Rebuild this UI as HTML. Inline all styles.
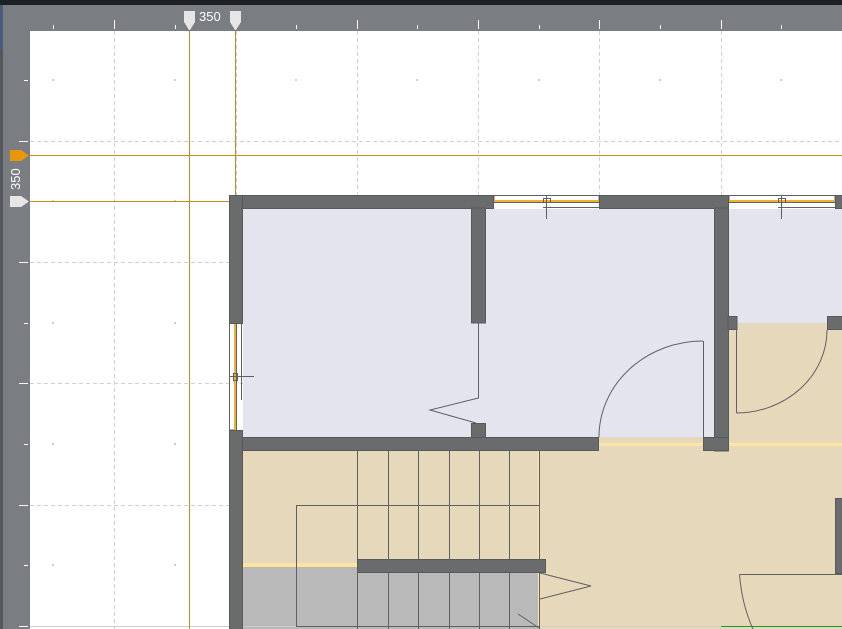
<!DOCTYPE html>
<html><head><meta charset="utf-8"><style>
html,body{margin:0;padding:0;width:842px;height:629px;overflow:hidden;background:#7a7e82}
svg{display:block}
</style></head><body>
<svg width="842" height="629" viewBox="0 0 842 629" xmlns="http://www.w3.org/2000/svg" shape-rendering="crispEdges">
<rect x="0" y="0" width="842" height="629" fill="#7a7e82"/>
<rect x="0" y="0" width="842" height="5" fill="#1d2125"/>
<rect x="0" y="5" width="3" height="624" fill="#55595d"/>
<rect x="0" y="5" width="3" height="45" fill="#4a5a80"/>
<rect x="30" y="31" width="812" height="598" fill="#ffffff"/>
<g stroke="#d0d0d0" stroke-width="1" stroke-dasharray="4,3">
<line x1="114.5" y1="31" x2="114.5" y2="629"/>
<line x1="236.5" y1="31" x2="236.5" y2="629"/>
<line x1="357.5" y1="31" x2="357.5" y2="629"/>
<line x1="478.5" y1="31" x2="478.5" y2="629"/>
<line x1="599.5" y1="31" x2="599.5" y2="629"/>
<line x1="721.5" y1="31" x2="721.5" y2="629"/>
<line x1="30" y1="141.5" x2="842" y2="141.5"/>
<line x1="30" y1="262.5" x2="842" y2="262.5"/>
<line x1="30" y1="383.5" x2="842" y2="383.5"/>
<line x1="30" y1="505.5" x2="842" y2="505.5"/>
</g>
<g fill="#cccccc">
<rect x="52" y="79" width="2" height="2"/><rect x="174" y="79" width="2" height="2"/><rect x="295" y="79" width="2" height="2"/><rect x="416" y="79" width="2" height="2"/><rect x="538" y="79" width="2" height="2"/><rect x="659" y="79" width="2" height="2"/><rect x="780" y="79" width="2" height="2"/>
<rect x="52" y="200" width="2" height="2"/><rect x="174" y="200" width="2" height="2"/>
<rect x="52" y="322" width="2" height="2"/><rect x="174" y="322" width="2" height="2"/>
<rect x="52" y="443" width="2" height="2"/><rect x="174" y="443" width="2" height="2"/>
<rect x="52" y="564" width="2" height="2"/><rect x="174" y="564" width="2" height="2"/>
</g>
<g fill="#ffffff">
<rect x="53" y="25" width="1" height="4"/><rect x="114" y="20" width="1" height="9"/><rect x="175" y="25" width="1" height="4"/><rect x="296" y="25" width="1" height="4"/><rect x="357" y="20" width="1" height="9"/><rect x="417" y="25" width="1" height="4"/><rect x="478" y="20" width="1" height="9"/><rect x="539" y="25" width="1" height="4"/><rect x="599" y="20" width="1" height="9"/><rect x="660" y="25" width="1" height="4"/><rect x="721" y="20" width="1" height="9"/><rect x="781" y="25" width="1" height="4"/>
<rect x="24" y="80" width="4" height="1"/><rect x="19" y="141" width="9" height="1"/><rect x="19" y="262" width="9" height="1"/><rect x="24" y="323" width="4" height="1"/><rect x="19" y="383" width="9" height="1"/><rect x="24" y="444" width="4" height="1"/><rect x="19" y="505" width="9" height="1"/><rect x="24" y="565" width="4" height="1"/><rect x="19" y="626" width="9" height="1"/>
</g>
<rect x="243" y="209" width="471" height="228" fill="#e4e4ee"/>
<rect x="729" y="209" width="113" height="114" fill="#e4e4ee"/>
<rect x="729" y="323" width="113" height="128" fill="#e6d8bb"/>
<rect x="243" y="451" width="599" height="178" fill="#e6d8bb"/>
<rect x="599" y="437" width="104" height="14" fill="#e6d8bb"/>
<rect x="599" y="443" width="243" height="3" fill="#fde4a0"/>
<rect x="243" y="563" width="114" height="4" fill="#fde4a0"/>
<rect x="243" y="567" width="297" height="62" fill="#b9b9b9"/>
<rect x="538" y="451" width="2" height="178" fill="#fde4a0"/>
<line x1="30" y1="626.5" x2="842" y2="626.5" stroke="#cccccc"/>
<line x1="721" y1="626.5" x2="842" y2="626.5" stroke="#1a9a1a"/>
<g stroke="#5f6062" stroke-width="1" fill="none">
<line x1="357.5" y1="451" x2="357.5" y2="629"/><line x1="388.5" y1="451" x2="388.5" y2="629"/><line x1="418.5" y1="451" x2="418.5" y2="629"/><line x1="449.5" y1="451" x2="449.5" y2="629"/><line x1="479.5" y1="451" x2="479.5" y2="629"/><line x1="509.5" y1="451" x2="509.5" y2="629"/><line x1="539.5" y1="451" x2="539.5" y2="629"/>
<line x1="296" y1="505.5" x2="540" y2="505.5"/>
<polyline points="296.5,505 296.5,626.5 540,626.5"/>
</g>
<g stroke="#5f6062" stroke-width="1" fill="none" shape-rendering="geometricPrecision">
<polyline points="540,573 591,586 540,599"/>
<line x1="518" y1="614" x2="539" y2="628"/>
<line x1="703.5" y1="341" x2="703.5" y2="437"/>
<path d="M599,437 A104,96 0 0 1 703,341"/>
<line x1="736.5" y1="330" x2="736.5" y2="413"/>
<path d="M736.5,413 A91,83 0 0 0 827,330"/>
<polyline points="478.5,323 478.5,398 430,410 476,423"/>
<line x1="739.5" y1="574.5" x2="842" y2="574.5"/>
<path d="M739.5,574.5 Q742,605 753,629"/>
</g>
<g fill="#fff" stroke="#5f6062" stroke-width="1">
<rect x="494" y="195.5" width="105" height="7"/>
<rect x="729" y="195.5" width="106" height="7"/>
<rect x="229.5" y="323" width="7" height="107"/>
</g>
<rect x="494" y="200" width="105" height="2" fill="#f0b030"/>
<rect x="729" y="200" width="106" height="2" fill="#f0b030"/>
<rect x="234" y="323" width="2" height="107" fill="#f0b030"/>
<g fill="none" stroke="#5f6062" stroke-width="1">
<rect x="543.5" y="198.5" width="7" height="4"/><line x1="546.5" y1="196" x2="546.5" y2="219"/>
<rect x="778.5" y="198.5" width="7" height="4"/><line x1="781.5" y1="196" x2="781.5" y2="219"/>
<rect x="233.5" y="373.5" width="4" height="7"/><line x1="230" y1="376.5" x2="254" y2="376.5"/>
<line x1="543" y1="207.5" x2="599" y2="207.5"/>
<line x1="778" y1="207.5" x2="835" y2="207.5"/>
<line x1="241.5" y1="323" x2="241.5" y2="400"/>
</g>
<g fill="#6a6b6d" stroke="#58595b" stroke-width="1">
<rect x="229.5" y="195.5" width="264" height="13"/>
<rect x="229.5" y="195.5" width="13" height="128"/>
<rect x="229.5" y="430.5" width="13" height="199"/>
<rect x="471.5" y="208" width="14" height="115"/>
<rect x="471.5" y="423.5" width="14" height="14"/>
<rect x="242.5" y="437.5" width="356" height="13"/>
<rect x="599.5" y="195.5" width="129" height="13"/>
<rect x="714.5" y="208" width="14" height="243"/>
<rect x="703.5" y="437.5" width="25" height="13"/>
<rect x="728" y="316.5" width="9" height="13"/>
<rect x="827.5" y="316.5" width="15" height="13"/>
<rect x="835.5" y="195.5" width="7" height="13"/>
<rect x="357.5" y="559.5" width="188" height="13"/>
<rect x="835.5" y="498.5" width="7" height="75"/>
</g>
<g stroke="#c98a20" stroke-width="1">
<line x1="189.5" y1="31" x2="189.5" y2="629"/>
<line x1="235.5" y1="31" x2="235.5" y2="195"/>
<line x1="30" y1="155.5" x2="842" y2="155.5"/>
<line x1="30" y1="201.5" x2="229" y2="201.5"/>
</g>
<path d="M184,11 H195 V22 L190,30 L189,30 L184,22 Z" fill="#e6e6e6"/>
<path d="M230,11 H241 V22 L236,30 L235,30 L230,22 Z" fill="#e6e6e6"/>
<text x="199" y="21" font-family="Liberation Sans, sans-serif" font-size="13" fill="#ffffff">350</text>
<path d="M10,150 H21 L29,155.5 L21,161 H10 Z" fill="#e8960a"/>
<path d="M10,196 H21 L29,201.5 L21,207 H10 Z" fill="#e6e6e6"/>
<text transform="translate(20,190) rotate(-90)" font-family="Liberation Sans, sans-serif" font-size="13" fill="#ffffff">350</text>
</svg>
</body></html>
